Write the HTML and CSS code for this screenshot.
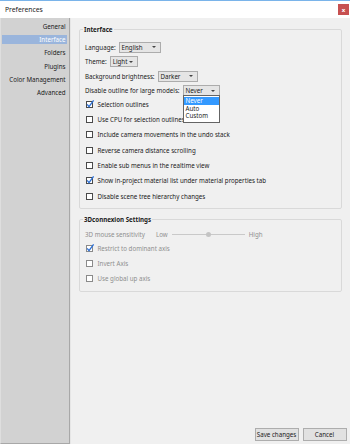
FILE: index.html
```html
<!DOCTYPE html>
<html lang="en">
<head>
  <meta charset="UTF-8" />
  <meta name="viewport" content="width=device-width, initial-scale=1.0" />
  <title>Preferences</title>
  <link rel="stylesheet" href="styles.css">
</head>
<body>
  <div class="window">
    <div class="titlebar">
      <span class="title">Preferences</span>
      <span class="close">x</span>
    </div>

    <div class="content">
      <!-- Category list -->
      <ul class="sidebar">
        <li>General</li>
        <li class="active">Interface</li>
        <li>Folders</li>
        <li>Plugins</li>
        <li>Color Management</li>
        <li>Advanced</li>
      </ul>

      <div class="main">
        <fieldset class="group">
          <legend>Interface</legend>
          <div class="field-row">
            <span>Language:</span>
            <span class="combo combo-lang">English</span>
          </div>
          <div class="field-row">
            <span>Theme:</span>
            <span class="combo combo-theme">Light</span>
          </div>
          <div class="field-row">
            <span>Background brightness:</span>
            <span class="combo combo-bright">Darker</span>
          </div>
          <div class="field-row">
            <span>Disable outline for large models:</span>
            <span class="combo combo-outline">Never
              <ul class="dropdown">
                <li class="selected">Never</li>
                <li>Auto</li>
                <li>Custom</li>
              </ul>
            </span>
          </div>

          <div class="checks">
            <div class="check-row">
              <span class="box"><svg viewBox="0 0 7 7" width="7" height="7"><path d="M1.2 3.4 L3 5.6 L7.6 -0.6" /></svg></span>
              Selection outlines
            </div>
            <div class="check-row"><span class="box"></span>Use CPU for selection outlines</div>
            <div class="check-row"><span class="box"></span>Include camera movements in the undo stack</div>
            <div class="check-row"><span class="box"></span>Reverse camera distance scrolling</div>
            <div class="check-row"><span class="box"></span>Enable sub menus in the realtime view</div>
            <div class="check-row">
              <span class="box"><svg viewBox="0 0 7 7" width="7" height="7"><path d="M1.2 3.4 L3 5.6 L7.6 -0.6" /></svg></span>
              Show in-project material list under material properties tab
            </div>
            <div class="check-row"><span class="box"></span>Disable scene tree hierarchy changes</div>
          </div>
        </fieldset>

        <fieldset class="group group-3d">
          <legend>3Dconnexion Settings</legend>
          <div class="slider-row disabled">
            <span class="slider-label">3D mouse sensitivity</span>
            <span>Low</span>
            <span class="track"><span class="handle"></span></span>
            <span>High</span>
          </div>
          <div class="checks disabled">
            <div class="check-row">
              <span class="box"><svg viewBox="0 0 7 7" width="7" height="7"><path d="M1.2 3.4 L3 5.6 L7.6 -0.6" /></svg></span>
              Restrict to dominant axis
            </div>
            <div class="check-row"><span class="box"></span>Invert Axis</div>
            <div class="check-row"><span class="box"></span>Use global up axis</div>
          </div>
        </fieldset>

        <div class="actions">
          <button>Save changes</button>
          <button>Cancel</button>
        </div>
      </div>
    </div>
  </div>
</body>
</html>
```

FILE: styles.css
```css
* {
  box-sizing: border-box;
}

body {
  margin: 0;
  font-family: 'Noto Sans', sans-serif;
  font-size: 6.2px;
  color: #1a1a1a;
  background-color: #f0f0f0;
}

.window {
  height: 100vh;
  display: flex;
  flex-direction: column;
}

.titlebar {
  height: 18px;
  border-top: 1px solid #7ab4ea;
  background-color: #fff;
  display: flex;
  align-items: center;
  justify-content: space-between;
  padding: 0 1px 0 5px;
}

.title {
  font-size: 6.8px;
}

.close {
  width: 11px;
  height: 11px;
  background-color: #c75050;
  color: #fff;
  font-size: 6px;
  font-weight: bold;
  display: flex;
  align-items: center;
  justify-content: center;
}

.content {
  flex: 1;
  display: flex;
  min-height: 0;
}

/* sidebar */
.sidebar {
  width: 70px;
  margin: 0;
  padding: 3.5px 0 0;
  list-style: none;
  display: flex;
  flex-direction: column;
  gap: 4.4px;
  background-color: #d2d2d2;
  border-left: 1px solid #dedede;
  border-right: 1px solid #a8a8a8;
  border-bottom: 1px solid #a8a8a8;
}

.sidebar li {
  height: 9px;
  line-height: 9px;
  margin: 0 2px 0 1px;
  padding-right: 1.5px;
  text-align: right;
}

.sidebar li.active {
  background-color: #9ab5dc;
  color: #fff;
}

/* main panel */
.main {
  flex: 1;
  display: flex;
  flex-direction: column;
  padding: 7px 8px 3px 8px;
  border-left: 1px solid #e6e6e6;
}

.group {
  margin: 0;
  min-width: 0;
  padding: 6px 5px 4.5px 5px;
  border: 1px solid #d9d9d9;
  border-radius: 2px;
}

.group legend {
  font-weight: bold;
  line-height: 9px;
  padding: 0 1px;
  margin-left: -2px;
}

.group-3d {
  margin-top: 5.5px;
  padding-top: 5.5px;
}

.field-row {
  height: 14.5px;
  display: flex;
  align-items: center;
  gap: 3px;
}

.combo {
  position: relative;
  height: 11px;
  line-height: 9px;
  padding-left: 2px;
  border: 1px solid #acacac;
  background-color: #e5e5e5;
}

.combo::after {
  content: '';
  position: absolute;
  right: 4px;
  top: 3.5px;
  border-left: 2px solid transparent;
  border-right: 2px solid transparent;
  border-top: 2px solid #444;
}

.combo-lang { width: 42px; }
.combo-theme { width: 28px; }
.combo-bright { width: 40px; }
.combo-outline { width: 37px; }

.dropdown {
  position: absolute;
  left: -1px;
  right: -1px;
  top: 100%;
  margin: 0;
  padding: 0.5px 0 1.5px;
  list-style: none;
  background-color: #fff;
  border: 1px solid #646464;
  z-index: 2;
}

.dropdown li {
  height: 7.8px;
  line-height: 7.8px;
  padding-left: 2px;
}

.dropdown li.selected {
  background-color: #3399ff;
  color: #fff;
}

.checks {
  margin-top: -1.4px;
}

.check-row {
  height: 15.3px;
  display: flex;
  align-items: center;
  gap: 4.5px;
  padding-left: 1px;
}

.box {
  width: 7px;
  height: 7px;
  border: 1px solid #4a4a4a;
  background-color: #fff;
  position: relative;
  flex: none;
}

.box svg {
  position: absolute;
  left: -1px;
  top: -1px;
  overflow: visible;
}

.box path {
  fill: none;
  stroke: #2b6fd5;
  stroke-width: 1.3;
}

.disabled {
  color: #8f8f8f;
}

.disabled .box {
  border-color: #8a8a8a;
}

.group-3d .checks {
  margin-top: 0;
}

.slider-row {
  height: 11.5px;
  display: flex;
  align-items: center;
}

.slider-label {
  width: 71px;
}

.track {
  position: relative;
  width: 73px;
  height: 1px;
  margin: 0 4px;
  background-color: #c9c9c9;
}

.handle {
  position: absolute;
  left: 34px;
  top: -2px;
  width: 5px;
  height: 5px;
  border-radius: 50%;
  background-color: #c4c4c4;
}

.actions {
  margin-top: auto;
  margin-right: -4.5px;
  display: flex;
  justify-content: flex-end;
  gap: 4px;
}

button {
  width: 44px;
  height: 13px;
  padding: 0;
  font-family: inherit;
  font-size: inherit;
  color: #1a1a1a;
  background-color: #e1e1e1;
  border: 1px solid #adadad;
}
```
